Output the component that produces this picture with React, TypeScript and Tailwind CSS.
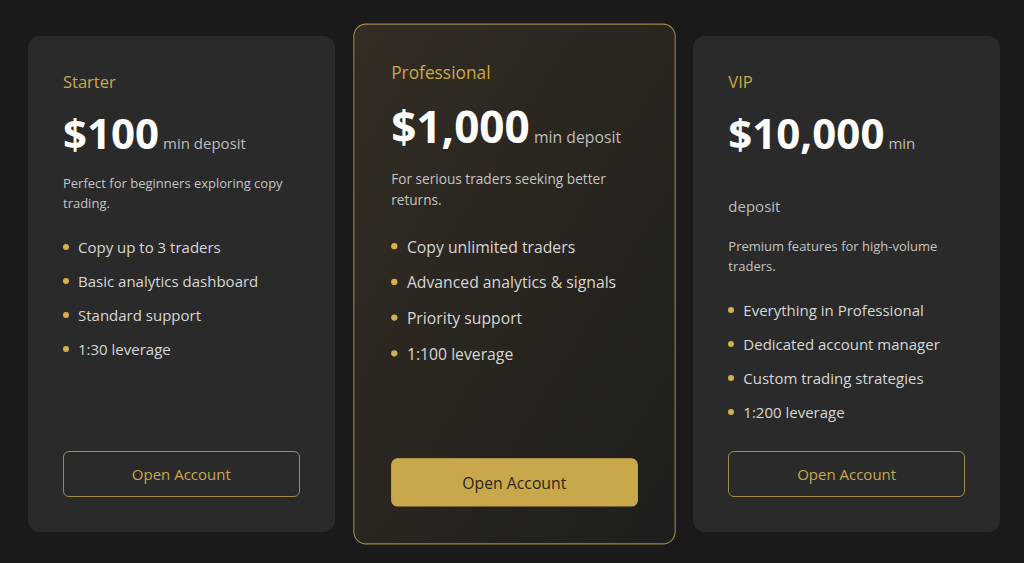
const plans = [
  {
    name: 'Starter',
    price: '$100',
    blurb: 'Perfect for beginners exploring copy trading.',
    features: ['Copy up to 3 traders', 'Basic analytics dashboard', 'Standard support', '1:30 leverage'],
    featured: false,
  },
  {
    name: 'Professional',
    price: '$1,000',
    blurb: 'For serious traders seeking better returns.',
    features: ['Copy unlimited traders', 'Advanced analytics & signals', 'Priority support', '1:100 leverage'],
    featured: true,
  },
  {
    name: 'VIP',
    price: '$10,000',
    blurb: 'Premium features for high-volume traders.',
    features: ['Everything in Professional', 'Dedicated account manager', 'Custom trading strategies', '1:200 leverage'],
    featured: false,
  },
];

function PlanCard({ plan }: { plan: (typeof plans)[number] }) {
  const card = plan.featured
    ? 'scale-105 border border-[#a38b4e] bg-gradient-to-br from-[#332d24] via-[#29251f] to-[#1f1e1c]'
    : 'bg-[#2a2a2a]';
  const button = plan.featured
    ? 'bg-[#c9a84c] text-[#2b2519] border border-[#c9a84c]'
    : 'border border-[#a38b4e] text-[#c9a84c]';

  return (
    <div className={`flex flex-col rounded-xl px-[35px] pt-[34px] pb-[35px] ${card}`}>
      <h3 className="text-[16.5px] leading-[24px] font-medium text-[#c9a84c]">{plan.name}</h3>
      <div className="mt-[7px] text-[42px] leading-[63px] font-bold text-white">
        {plan.price}
        <span className="ml-1 text-[15px] leading-none font-normal text-[#bdbdbd]">min deposit</span>
      </div>
      <p className="mt-[9px] text-[13px] leading-[20px] text-[#c4c4c4]">{plan.blurb}</p>
      <ul className="mt-[23px] mb-[28px] flex flex-col gap-[12px]">
        {plan.features.map((f) => (
          <li key={f} className="flex items-center gap-[9px] text-[15px] leading-[22px] text-[#d6d6d6]">
            <span className="h-[6px] w-[6px] shrink-0 rounded-full bg-[#d4af4f]" />
            {f}
          </li>
        ))}
      </ul>
      <button className={`mt-auto h-[46px] w-full rounded-md text-[15px] font-medium ${button}`}>Open Account</button>
    </div>
  );
}

export default function App() {
  return (
    <div
      className="min-h-[563px] bg-[#1a1a1a] pl-[28px] pr-[24px] pt-[36px] pb-[32px]"
      style={{ fontFamily: '"Open Sans", "DejaVu Sans", sans-serif' }}
    >
      <div className="grid grid-cols-3 gap-[26px]">
        {plans.map((p) => (
          <PlanCard key={p.name} plan={p} />
        ))}
      </div>
    </div>
  );
}
